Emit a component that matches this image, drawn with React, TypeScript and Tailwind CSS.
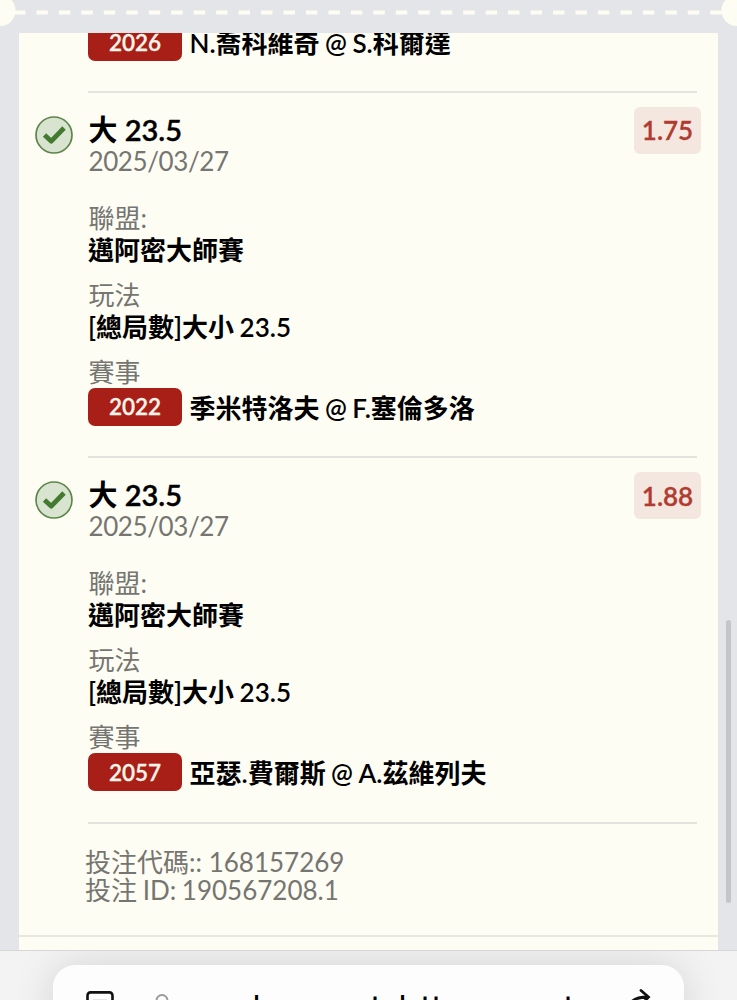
import React from "react";

const FONT = "font-['Lato','Noto_Sans_CJK_TC',sans-serif]";

function CheckBadge() {
  return (
    <svg viewBox="0 0 38 38" className="h-[38px] w-[38px]" fill="none">
      <circle cx="19" cy="19" r="18" fill="#d9e4d0" stroke="#5b8549" strokeWidth="1.7" />
      <path d="M9.5 19L16.3 25.2L29 12" stroke="#437a30" strokeWidth="4.8" strokeLinejoin="round" />
    </svg>
  );
}

function Match({ code, teams }: { code: string; teams: string }) {
  return (
    <div className="flex h-[38px] items-center gap-[7px]">
      <span className="flex h-[38px] w-[94px] shrink-0 items-center justify-center rounded-[7px] bg-[#a71f17] pt-px text-[22.5px] font-semibold text-[#fdf3e9] [-webkit-text-stroke:0.3px]">
        {code}
      </span>
      <span className="pt-[2px] pl-[0.5px] text-[26px] leading-[38px] font-semibold whitespace-nowrap text-black [word-spacing:-1px]">
        {teams}
      </span>
    </div>
  );
}

function Field({ label, children }: { label: string; children: React.ReactNode }) {
  return (
    <div>
      <div className="h-8 pl-[0.5px] text-[26px] leading-8 text-[#757571]">{label}</div>
      <div className="text-[26px] leading-8 font-semibold whitespace-nowrap text-black [word-spacing:-1px]">
        {children}
      </div>
    </div>
  );
}

function Bet({ odds, code, teams }: { odds: string; code: string; teams: string }) {
  return (
    <section className="flex h-[365.5px] pl-4">
      <div className="w-[53px] shrink-0 pt-[23px]">
        <CheckBadge />
      </div>
      <div className="mr-[21px] flex flex-1 flex-col border-b-2 border-[#e4e4de] pt-[21px]">
        <div className="flex h-[88px] justify-between">
          <div>
            <div className="h-[31px] pl-[0.5px] text-[29px] leading-[32px] font-semibold text-black">
              大 <span className="[-webkit-text-stroke:0.4px]">23.5</span>
            </div>
            <div className="pl-[0.5px] text-[26px] leading-[33px] tracking-[-0.4px] text-[#757571]">2025/03/27</div>
          </div>
          <div className="-mt-[7px] -mr-1 flex h-[47px] w-[67px] items-center justify-center rounded-md bg-[#f4e7e0] pt-px text-[26px] font-semibold text-[#af3b31] [-webkit-text-stroke:0.3px]">
            {odds}
          </div>
        </div>
        <div className="flex flex-col gap-[13px]">
          <Field label="聯盟:">邁阿密大師賽</Field>
          <Field label="玩法">[總局數]大小 23.5</Field>
          <Field label="賽事">
            <Match code={code} teams={teams} />
          </Field>
        </div>
      </div>
    </section>
  );
}

function BrowserBar() {
  return (
    <footer className="relative h-[50px] overflow-hidden border-t border-[#d6d6d6] bg-[#f3f3f3] px-[53px] pt-[14px]">
      <div className="flex h-[90px] rounded-[22px] bg-[#fdfdfd] pt-[25px] pl-[33px] shadow-[0_0_40px_rgba(0,0,0,0.13)]">
        <svg viewBox="0 0 28 30" className="h-[30px] w-7" fill="none" stroke="#111" strokeWidth="2.6">
          <rect x="1.5" y="2.4" width="25" height="22" rx="3" />
          <path d="M7 11.2h14" />
        </svg>
        <svg viewBox="0 0 16 30" className="ml-10 h-[30px] w-4" fill="none" stroke="#999" strokeWidth="1.9">
          <path d="M2.5 16V10.5a5.5 5.5 0 0 1 11 0v5.5" />
          <rect x="1" y="16" width="14" height="11" rx="2" fill="#999" />
        </svg>
        <span className="ml-[20px] flex w-[437px] shrink-0 font-['Inter',sans-serif] text-[28px] leading-8 font-medium text-black">
          <span className="w-[63px] shrink-0">sup.</span>
          <span className="w-[118px] shrink-0">bonusar</span>
          <span className="w-[28px] shrink-0">ta</span>
          <span className="w-[22px] shrink-0">lo</span>
          <span className="w-[11px] shrink-0">t</span>
          <span className="w-[132px] shrink-0">to.across</span>
          <span className="w-[60px] shrink-0">t</span>
        </span>
        <svg
          viewBox="0 0 30 34"
          className="-mt-[2px] h-[34px] w-[30px] shrink-0"
          fill="none"
          stroke="#111"
          strokeWidth="2.8"
          strokeLinecap="round"
        >
          <path d="M2 18c2-6 9-9 19-9M14 2.5l7.5 6.5-6.5 7" />
        </svg>
      </div>
    </footer>
  );
}

export default function App() {
  return (
    <div className={`${FONT} relative flex h-[1000px] w-[737px] flex-col overflow-hidden bg-[#e4e5e8]`}>
      <header className="h-[33px] shrink-0 overflow-hidden">
        <svg viewBox="0 0 737 33" className="h-[33px] w-[737px]">
          <circle cx="0" cy="10.5" r="15.5" fill="#fefdf4" />
          <circle cx="737" cy="10.5" r="15.5" fill="#fefdf4" />
          <path d="M14 12.5H723" stroke="#fefdf4" strokeWidth="4" strokeDasharray="11.4 11.06" />
        </svg>
      </header>
      <main className="mx-[19px] h-[917px] w-[699px] shrink-0 overflow-hidden bg-[#fefdf4]">
        <div className="mr-[21px] ml-[69px] flex h-[59.5px] flex-col border-b-2 border-[#e4e4de]">
          <div className="-mt-[10px] h-[38px]">
            <Match code="2026" teams="N.喬科維奇 @ S.科爾達" />
          </div>
        </div>
        <Bet odds="1.75" code="2022" teams="季米特洛夫 @ F.塞倫多洛" />
        <Bet odds="1.88" code="2057" teams="亞瑟.費爾斯 @ A.茲維列夫" />
        <div className="h-[113px] border-b-2 border-[#e8e8e2] pt-[24px] pl-[66px] text-[26px] leading-[28px] text-[#757571]">
          <div>投注代碼:: 168157269</div>
          <div className="[word-spacing:-1px]">投注 ID: 190567208.1</div>
        </div>
      </main>
      <BrowserBar />
      <div className="absolute top-[620px] right-[6px] h-[283px] w-[5px] rounded-full bg-[#c4c5c7]" />
    </div>
  );
}
